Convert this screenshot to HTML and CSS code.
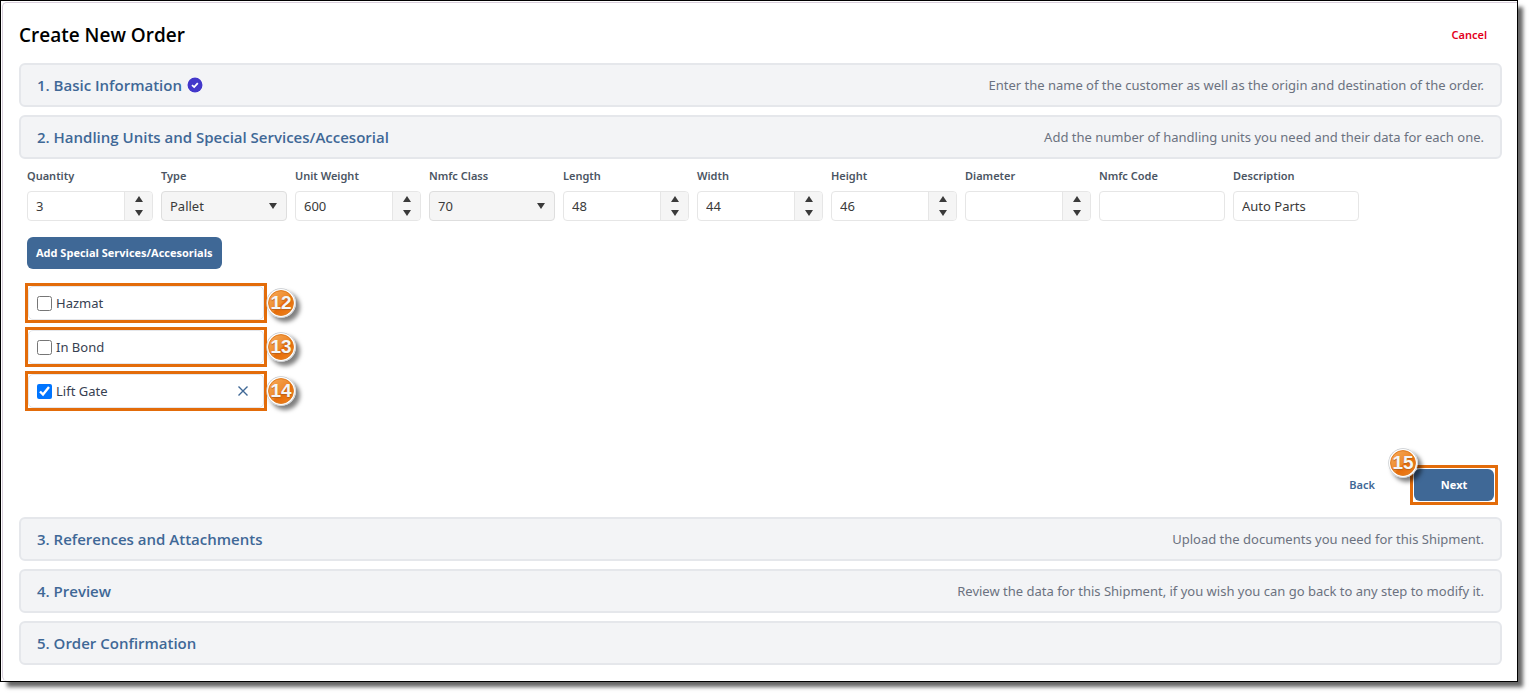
FILE: index.html
```html
<!DOCTYPE html>
<html lang="en">
<head>
<meta charset="utf-8">
<title>Create New Order</title>
<link rel="stylesheet" href="styles.css">
</head>
<body>
<svg class="defs" width="0" height="0" aria-hidden="true">
  <defs>
    <linearGradient id="orange" x1="0" y1="0" x2="1" y2="1">
      <stop offset="0" stop-color="#f6ab5c"/>
      <stop offset="0.5" stop-color="#ee8a2c"/>
      <stop offset="0.55" stop-color="#e66c0a"/>
      <stop offset="1" stop-color="#ef8420"/>
    </linearGradient>
    <symbol id="disc" viewBox="0 0 30 30">
      <circle cx="15" cy="15" r="14.7" fill="#c4c8cc"/>
      <circle cx="15" cy="15" r="14" fill="#fff"/>
      <circle cx="15" cy="15" r="12.4" fill="url(#orange)" stroke="#e07a1c" stroke-width="1"/>
    </symbol>
    <symbol id="up" viewBox="0 0 8 6"><path d="M4 0 8 6H0z"/></symbol>
    <symbol id="down" viewBox="0 0 8 6"><path d="M0 0H8L4 6z"/></symbol>
  </defs>
</svg>
<main class="frame">
  <div class="page">
    <header class="header">
      <h1 class="title">Create New Order</h1>
      <button class="cancel" type="button">Cancel</button>
    </header>

    <section class="step">
      <h2 class="step-title">1. Basic Information
        <svg class="done" viewBox="0 0 16 16" aria-hidden="true"><circle cx="8" cy="8" r="8" fill="#fff"/><circle cx="8" cy="8" r="7.5" fill="#4338ca"/><path d="M5 8.1 7.2 10.1 10.8 6.2" fill="none" stroke="#fff" stroke-width="1.8"/></svg>
      </h2>
      <p class="hint">Enter the name of the customer as well as the origin and destination of the order.</p>
    </section>

    <section class="step">
      <h2 class="step-title">2. Handling Units and Special Services/Accesorial</h2>
      <p class="hint">Add the number of handling units you need and their data for each one.</p>
    </section>

    <form class="content">
      <div class="fields">
        <div class="field"><label for="quantity">Quantity</label>
          <div class="control"><input id="quantity" type="text" value="3"><span class="spin"><button type="button" aria-label="Increase quantity"><svg><use href="#up"/></svg></button><button type="button" aria-label="Decrease quantity"><svg><use href="#down"/></svg></button></span></div></div>
        <div class="field"><label for="type">Type</label>
          <div class="control picker"><select id="type"><option>Pallet</option></select><svg class="arrow"><use href="#down"/></svg></div></div>
        <div class="field"><label for="weight">Unit Weight</label>
          <div class="control"><input id="weight" type="text" value="600"><span class="spin"><button type="button" aria-label="Increase weight"><svg><use href="#up"/></svg></button><button type="button" aria-label="Decrease weight"><svg><use href="#down"/></svg></button></span></div></div>
        <div class="field"><label for="class">Nmfc Class</label>
          <div class="control picker"><select id="class"><option>70</option></select><svg class="arrow"><use href="#down"/></svg></div></div>
        <div class="field"><label for="length">Length</label>
          <div class="control"><input id="length" type="text" value="48"><span class="spin"><button type="button" aria-label="Increase length"><svg><use href="#up"/></svg></button><button type="button" aria-label="Decrease length"><svg><use href="#down"/></svg></button></span></div></div>
        <div class="field"><label for="width">Width</label>
          <div class="control"><input id="width" type="text" value="44"><span class="spin"><button type="button" aria-label="Increase width"><svg><use href="#up"/></svg></button><button type="button" aria-label="Decrease width"><svg><use href="#down"/></svg></button></span></div></div>
        <div class="field"><label for="height">Height</label>
          <div class="control"><input id="height" type="text" value="46"><span class="spin"><button type="button" aria-label="Increase height"><svg><use href="#up"/></svg></button><button type="button" aria-label="Decrease height"><svg><use href="#down"/></svg></button></span></div></div>
        <div class="field"><label for="diameter">Diameter</label>
          <div class="control"><input id="diameter" type="text"><span class="spin"><button type="button" aria-label="Increase diameter"><svg><use href="#up"/></svg></button><button type="button" aria-label="Decrease diameter"><svg><use href="#down"/></svg></button></span></div></div>
        <div class="field"><label for="code">Nmfc Code</label>
          <div class="control"><input id="code" type="text"></div></div>
        <div class="field"><label for="description">Description</label>
          <div class="control"><input id="description" type="text" value="Auto Parts"></div></div>
      </div>

      <button class="primary add" type="button">Add Special Services/Accesorials</button>

      <div class="services">
        <div class="callout service">
          <div class="service-box"><input id="hazmat" type="checkbox"><label for="hazmat">Hazmat</label></div>
          <span class="badge"><svg><use href="#disc"/></svg><b>12</b></span>
        </div>
        <div class="callout service">
          <div class="service-box"><input id="bond" type="checkbox"><label for="bond">In Bond</label></div>
          <span class="badge"><svg><use href="#disc"/></svg><b>13</b></span>
        </div>
        <div class="callout service">
          <div class="service-box"><input id="gate" type="checkbox" checked><label for="gate">Lift Gate</label>
            <button class="remove" type="button" aria-label="Remove Lift Gate"><svg viewBox="0 0 10 10"><path d="M0.5 0.5 9.5 9.5M9.5 0.5 0.5 9.5"/></svg></button></div>
          <span class="badge"><svg><use href="#disc"/></svg><b>14</b></span>
        </div>
      </div>

      <div class="actions">
        <button class="back" type="button">Back</button>
        <div class="callout next-wrap">
          <button class="primary next" type="button">Next</button>
          <span class="badge corner"><svg><use href="#disc"/></svg><b>15</b></span>
        </div>
      </div>
    </form>

    <section class="step">
      <h2 class="step-title">3. References and Attachments</h2>
      <p class="hint">Upload the documents you need for this Shipment.</p>
    </section>
    <section class="step">
      <h2 class="step-title">4. Preview</h2>
      <p class="hint">Review the data for this Shipment, if you wish you can go back to any step to modify it.</p>
    </section>
    <section class="step">
      <h2 class="step-title">5. Order Confirmation</h2>
    </section>
  </div>
</main>
</body>
</html>
```
FILE: styles.css
```css
* {
  box-sizing: border-box;
}

body {
  margin: 0;
  padding: 0 15px 14px 0;
  background: #fff;
  color: #374151;
  font: 13px/20px "Noto Sans", "Open Sans", sans-serif;
}

button,
input,
select {
  margin: 0;
  font: inherit;
  color: inherit;
}

h1,
h2,
p {
  margin: 0;
}

.defs {
  position: absolute;
}

.frame {
  padding: 1px 0 0 1px;
  border: 1px solid #000;
  box-shadow: 6px 6px 4px -1px rgba(0, 0, 0, 0.6);
}

.page {
  display: flex;
  flex-direction: column;
  gap: 8px;
  padding: 12px 15px 16px 16px;
  border: solid #d9cfdc;
  border-width: 1px 0 0 1px;
  border-radius: 5px 0 0 5px;
}

.header {
  display: flex;
  align-items: center;
  justify-content: space-between;
  height: 40px;
  padding-right: 15px;
}

.title {
  color: #000;
  font-family: "Open Sans", sans-serif;
  font-size: 19px;
  line-height: 28px;
  font-weight: 600;
}

.cancel,
.back {
  padding: 0;
  border: 0;
  background: none;
  font-size: 11px;
  font-weight: 600;
}

.cancel {
  color: #e3001b;
}

.step {
  display: flex;
  align-items: center;
  justify-content: space-between;
  height: 44px;
  padding: 0 16px;
  border: 2px solid #e5e7eb;
  border-radius: 6px;
  background: #f3f4f6;
}

.step-title {
  display: flex;
  align-items: center;
  gap: 5px;
  color: #3f6896;
  font-family: "Open Sans", sans-serif;
  font-size: 15px;
  line-height: 24px;
  font-weight: 600;
}

.done {
  width: 16px;
  height: 16px;
}

.hint {
  color: #6b7280;
}

.content {
  display: flex;
  flex-direction: column;
  padding: 0 4px 4px 6px;
}

.fields {
  display: flex;
  gap: 8px;
  padding-left: 2px;
}

.field {
  display: flex;
  flex-direction: column;
  gap: 6px;
  flex: 0 1 126px;
  min-width: 0;
}

.field label {
  color: #4b5563;
  font-size: 11px;
  line-height: 18px;
  font-weight: 600;
}

.control {
  display: flex;
  position: relative;
  height: 30px;
  border: 1px solid #e6e6e6;
  border-radius: 4px;
  overflow: hidden;
}

.control input,
.control select {
  flex: 1;
  min-width: 0;
  padding: 0 8px;
  border: 0;
  background: none;
  color: #3a3a3a;
  outline: 0;
}

.control select {
  appearance: none;
}

.picker {
  border-color: #dedede;
  background: #f5f5f5;
}

.arrow {
  position: absolute;
  top: 11px;
  right: 9px;
  width: 8px;
  height: 6px;
  fill: #3a3a3a;
  pointer-events: none;
}

.spin {
  display: flex;
  flex-direction: column;
  width: 28px;
  border-left: 1px solid #e6e6e6;
  background: #f5f5f5;
}

.spin button {
  display: flex;
  flex: 1;
  align-items: center;
  justify-content: center;
  padding: 0;
  border: 0;
  background: none;
}

.spin svg {
  width: 8px;
  height: 6px;
  fill: #3a3a3a;
}

.primary {
  height: 32px;
  border: 0;
  border-radius: 6px;
  background: #3f6896;
  color: #fff;
  font-family: "Open Sans", sans-serif;
  font-size: 11px;
  font-weight: 700;
}

.add {
  align-self: flex-start;
  margin: 16px 0 14px 2px;
  padding: 0 9px;
}

.services {
  display: flex;
  flex-direction: column;
  gap: 4px;
}

.callout {
  position: relative;
  height: 40px;
  border: 3px solid #e36c0a;
}

.service {
  width: 242px;
}

.service-box {
  display: flex;
  align-items: center;
  gap: 4px;
  height: 34px;
  padding: 0 13px 0 8px;
  border: 1px solid #e5e7eb;
  border-radius: 5px;
}

.service-box input {
  width: 15px;
  height: 15px;
}

.remove {
  display: flex;
  margin-left: auto;
  padding: 2px;
  border: 0;
  background: none;
}

.remove svg {
  width: 10px;
  height: 10px;
  fill: none;
  stroke: #3f6896;
  stroke-width: 1.4;
}

.badge {
  position: absolute;
  top: 2px;
  left: 238px;
  display: grid;
  place-items: center;
  width: 30px;
  height: 30px;
  border-radius: 50%;
  box-shadow: 4px 4px 4px rgba(0, 0, 0, 0.5);
}

.badge svg,
.badge b {
  grid-area: 1 / 1;
}

.badge svg {
  width: 30px;
  height: 30px;
}

.badge b {
  color: #f4f6f8;
  font: bold 19px/20px "Liberation Sans", Arial, sans-serif;
  text-shadow: 0 1px 1px #b9611b;
}

.corner {
  top: -20px;
  left: -25px;
}

.actions {
  display: flex;
  align-items: center;
  justify-content: flex-end;
  gap: 35px;
  margin-top: 54px;
}

.back {
  color: #3f6896;
}

.next-wrap {
  padding: 1px;
}

.next {
  width: 80px;
}
```
